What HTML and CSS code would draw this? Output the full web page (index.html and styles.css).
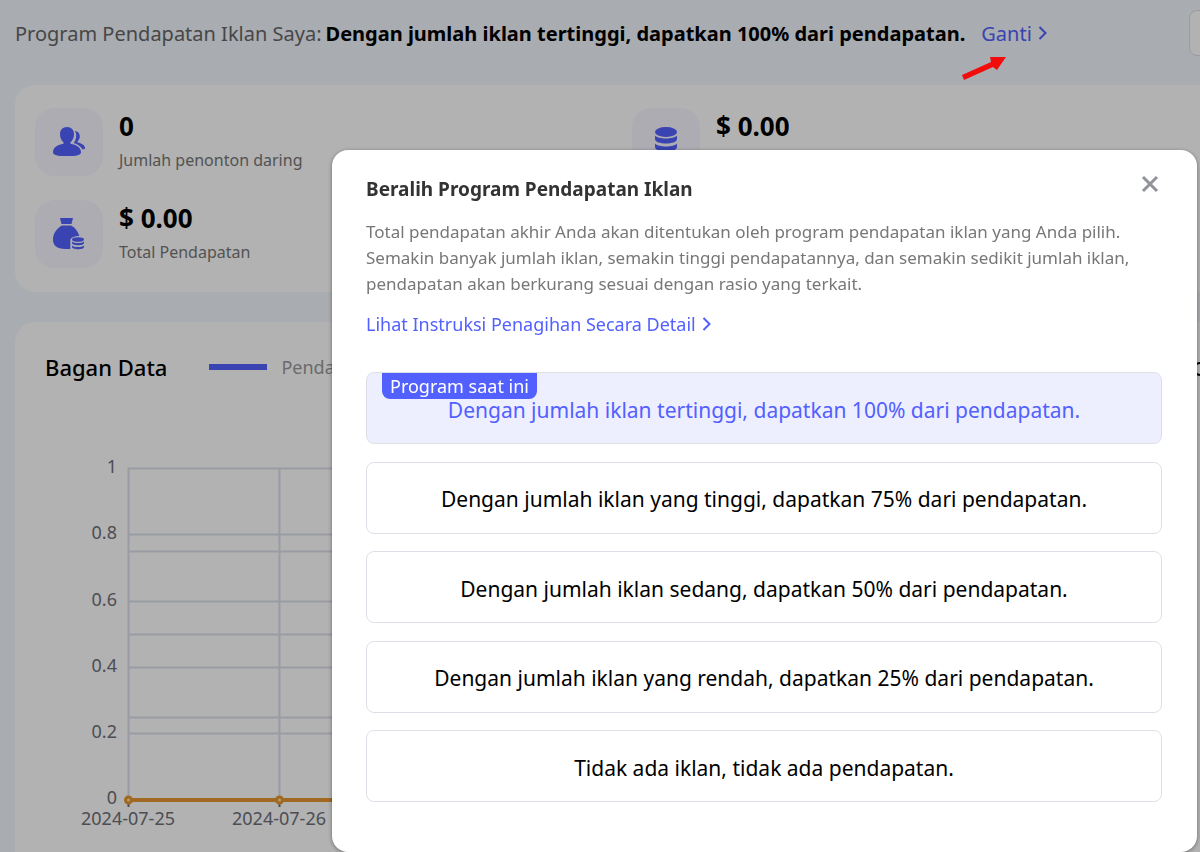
FILE: index.html
```
<!DOCTYPE html>
<html lang="id">
<head>
    <meta charset="UTF-8">
    <meta name="viewport" content="width=device-width, initial-scale=1.0">
    <title>Program Pendapatan Iklan</title>
    <link rel="stylesheet" href="styles.css">
</head>
<body>
    <div class="page">
        <header class="topbar">
            <span class="topbar-label">Program Pendapatan Iklan Saya:</span>
            <strong>Dengan jumlah iklan tertinggi, dapatkan 100% dari pendapatan.</strong>
            <a class="switch-link" href="#dialog">Ganti
                <svg width="10" height="16" viewBox="0 0 10 16"><path d="M1.500 2l6 6-6 6" /></svg>
            </a>
            <button class="topbar-button" type="button" aria-label="Menu"></button>
        </header>

        <section class="card stats">
            <div class="stat">
                <div class="stat-icon">
                    <svg width="34" height="30" viewBox="0 0 34 30">
                        <path d="M15 0c4.400 0 7 3 7 7.200 0 3.300-1.300 6.300-3.500 8v1.600c5.500.900 10.500 3.600 10.500 8.400 0 3-4.500 3.800-14 3.800S1 28.200 1 25.200c0-4.800 5-7.500 10.500-8.400v-1.600C9.300 13.500 8 10.500 8 7.200 8 3 10.600 0 15 0z" />
                        <path d="M22.600 4c3.200.200 5.200 2.300 5.200 5.200 0 2-.8 3.900-2.200 5.100v1.200c3.900.800 7.400 2.900 7.400 5.600 0 .700-.8 1.200-2.400 1.500-1.800-3.400-5-5.600-8.900-6.700 1.800-2.300 2.500-4.900 2.500-7.700 0-1.500-.5-3-1.600-4.200z" />
                    </svg>
                </div>
                <div class="stat-text">
                    <strong>0</strong>
                    <span>Jumlah penonton daring</span>
                </div>
            </div>
            <div class="stat">
                <div class="stat-icon">
                    <svg width="24" height="30" viewBox="0 0 24 30">
                        <ellipse cx="12" cy="5" rx="11" ry="5" />
                        <path d="M1 8.500c3 4 19 4 22 0v3.500c0 6-22 6-22 0z" />
                        <path d="M1 16.500c3 4 19 4 22 0v3.500c0 6-22 6-22 0z" />
                        <path d="M1 24c3 4 19 4 22 0v1c0 6-22 6-22 0z" />
                    </svg>
                </div>
                <div class="stat-text">
                    <strong>$ 0.00</strong>
                </div>
            </div>
            <div class="stat">
                <div class="stat-icon">
                    <svg width="34" height="34" viewBox="0 0 34 34">
                        <path d="M8 1h13l-1.500 6h-10z" />
                        <path d="M10 8.500h9c4 2 7 6 8.300 10.500-5 0-9 1.500-9 4.500v8.500H13C5 32 1 28.500 1 22.500 1 16.500 5 11 10 8.500z" />
                        <ellipse cx="26" cy="22.500" rx="6" ry="2.300" />
                        <path d="M20 24.500c2 2 10 2 12 0v1.500c0 3-12 3-12 0z" />
                        <path d="M20 28.500c2 2 10 2 12 0v1.500c0 3-12 3-12 0z" />
                    </svg>
                </div>
                <div class="stat-text">
                    <strong>$ 0.00</strong>
                    <span>Total Pendapatan</span>
                </div>
            </div>
        </section>

        <section class="card chart-card">
            <div class="chart-head">
                <h2>Bagan Data</h2>
                <span class="legend-line"></span>
                <span class="legend-text">Pendapatan</span>
                <span class="chart-option"></span>
            </div>
            <svg class="chart" width="100%" height="400">
                <g class="grid-lines">
                    <path d="M83.500 22v332M234.500 22v332" />
                    <path d="M83 22.500h1061M83 88.500h1061M83 105.500h1061M83 155.500h1061M83 188.500h1061M83 221.500h1061M83 271.500h1061M83 287.500h1061" />
                </g>
                <path class="ticks" d="M83.500 354v7M234.500 354v7" />
                <path class="series" d="M83 354h1061" />
                <g class="points">
                    <circle cx="83.500" cy="354" r="3" />
                    <circle cx="234.500" cy="354" r="3" />
                </g>
                <g class="y-labels">
                    <text x="72" y="27">1</text>
                    <text x="72" y="93">0.8</text>
                    <text x="72" y="160">0.6</text>
                    <text x="72" y="226">0.4</text>
                    <text x="72" y="292">0.2</text>
                    <text x="72" y="358">0</text>
                </g>
                <g class="x-labels">
                    <text x="83" y="379">2024-07-25</text>
                    <text x="234" y="379">2024-07-26</text>
                </g>
            </svg>
        </section>
    </div>

    <div class="overlay">
        <div class="dialog" id="dialog" role="dialog" aria-labelledby="dialog-title">
            <div class="dialog-head">
                <h1 id="dialog-title">Beralih Program Pendapatan Iklan</h1>
                <button class="close" type="button" aria-label="Tutup">
                    <svg width="18" height="18" viewBox="0 0 18 18"><path d="M2 2l14 14M16 2L2 16" /></svg>
                </button>
            </div>
            <p>Total pendapatan akhir Anda akan ditentukan oleh program pendapatan iklan yang Anda pilih. Semakin banyak jumlah iklan, semakin tinggi pendapatannya, dan semakin sedikit jumlah iklan, pendapatan akan berkurang sesuai dengan rasio yang terkait.</p>
            <a class="detail-link" href="#">Lihat Instruksi Penagihan Secara Detail
                <svg width="10" height="16" viewBox="0 0 10 16"><path d="M1.500 2l6 6-6 6" /></svg>
            </a>
            <div class="options">
                <button class="option active" type="button">
                    <span class="badge">Program saat ini</span>
                    Dengan jumlah iklan tertinggi, dapatkan 100% dari pendapatan.
                </button>
                <button class="option" type="button">Dengan jumlah iklan yang tinggi, dapatkan 75% dari pendapatan.</button>
                <button class="option" type="button">Dengan jumlah iklan sedang, dapatkan 50% dari pendapatan.</button>
                <button class="option" type="button">Dengan jumlah iklan yang rendah, dapatkan 25% dari pendapatan.</button>
                <button class="option" type="button">Tidak ada iklan, tidak ada pendapatan.</button>
            </div>
        </div>
    </div>

    <svg class="arrow" width="46" height="26" viewBox="0 0 46 26">
        <path d="M0 19L29 6 28 1 44 1 35 14 31 11 2 24z" />
    </svg>
</body>
</html>
```

FILE: styles.css
```
* {
    box-sizing: border-box;
}
body {
    margin: 0;
    height: 100vh;
    overflow: hidden;
    background: #f3f6fd;
    color: #000;
    font-family: "Noto Sans", sans-serif;
    font-size: 20px;
}
a {
    color: #5260ff;
    text-decoration: none;
}
/* the page is wider than the window and is cut at the right */
.page {
    margin-right: -49px;
    padding: 10px 0 0 15px;
}
.topbar {
    display: flex;
    align-items: center;
    height: 46px;
    margin-bottom: 29px;
    white-space: nowrap;
}
.topbar-label {
    margin-right: 4px;
    color: #666;
}
.switch-link, .detail-link {
    display: flex;
    align-items: center;
    gap: 6px;
}
.switch-link {
    margin-left: 16px;
}
.switch-link svg, .detail-link svg {
    fill: none;
    stroke: #5260ff;
    stroke-width: 2;
}
.topbar-button {
    width: 60px;
    height: 46px;
    margin-left: auto;
    border: 1px solid #dcdfe6;
    border-radius: 8px;
    background: #fff;
}
.card {
    background: #fff;
    border-radius: 20px;
}
.stats {
    display: grid;
    grid-template-columns: 1fr 1fr;
    row-gap: 24px;
    padding: 23px 20px 24px;
    margin-bottom: 30px;
}
.stat {
    display: flex;
    gap: 16px;
}
.stat-icon {
    display: flex;
    align-items: center;
    justify-content: center;
    width: 68px;
    height: 68px;
    border-radius: 20px;
    background: #f6f7ff;
    fill: #5260ff;
}
.stat-text {
    display: flex;
    flex-direction: column;
}
.stat-text strong {
    font-size: 26px;
    line-height: 36px;
}
.stat-text span {
    color: #777;
    font-size: 16px;
    line-height: 32px;
}
.chart-card {
    padding: 30px;
}
.chart-head {
    display: flex;
    align-items: center;
    height: 30px;
    margin-bottom: 64px;
}
.chart-head h2 {
    margin: 0 42px 0 0;
    font-size: 22px;
    font-weight: 500;
}
.legend-line {
    width: 58px;
    height: 6px;
    margin-right: 14px;
    background: #5260ff;
}
.legend-text {
    color: #999;
    font-size: 18px;
}
.chart-option {
    width: 14px;
    height: 14px;
    margin: 4px 12px 0 auto;
    border: 2px solid #000;
    border-radius: 50%;
}
.chart {
    display: block;
}
.grid-lines {
    fill: none;
    stroke: #dce1ea;
    stroke-width: 2;
}
.ticks {
    stroke: #6e7079;
    stroke-width: 2;
}
.series {
    stroke: #e6962e;
    stroke-width: 4;
}
.points {
    fill: #ffe0a0;
    stroke: #e6962e;
    stroke-width: 3;
}
.y-labels, .x-labels {
    fill: #6e7079;
    font-size: 18px;
}
.y-labels {
    text-anchor: end;
}
.x-labels {
    text-anchor: middle;
}
.overlay {
    position: fixed;
    inset: 0;
    padding: 150px 3px 0 332px;
    background: rgba(0, 0, 0, 0.3);
}
.dialog {
    padding: 20px 35px 50px 34px;
    border-radius: 16px;
    background: #fff;
    box-shadow: 0 1px 4px rgba(0, 0, 0, 0.4);
}
.dialog-head {
    display: flex;
    align-items: center;
    justify-content: space-between;
    height: 38px;
    margin-bottom: 11px;
}
.dialog-head h1 {
    margin: 0;
    color: #333;
    font-size: 19px;
}
.close {
    display: flex;
    margin-bottom: 10px;
    padding: 3px;
    border: 0;
    background: none;
}
.close svg {
    stroke: #909399;
    stroke-width: 3;
}
.dialog p {
    margin: 0 0 14px;
    color: #777;
    font-size: 17px;
    line-height: 26px;
}
.detail-link {
    height: 26px;
    margin-bottom: 35px;
    font-size: 18px;
}
.options {
    display: flex;
    flex-direction: column;
    justify-content: space-between;
    min-height: 430px;
}
.option {
    position: relative;
    height: 72px;
    padding: 3px 0 0;
    border: 1px solid #dcdfe6;
    border-radius: 8px;
    background: #fff;
    color: #000;
    font-family: inherit;
    font-size: 21px;
    cursor: pointer;
}
.option.active {
    background: #edefff;
    color: #5260ff;
}
.badge {
    position: absolute;
    top: 0;
    left: 15px;
    padding: 0 8px;
    border-radius: 0 0 8px 8px;
    background: #5260ff;
    color: #fff;
    font-size: 18px;
    line-height: 26px;
}
.arrow {
    position: fixed;
    top: 56px;
    left: 962px;
    fill: #f20d0d;
}
```
